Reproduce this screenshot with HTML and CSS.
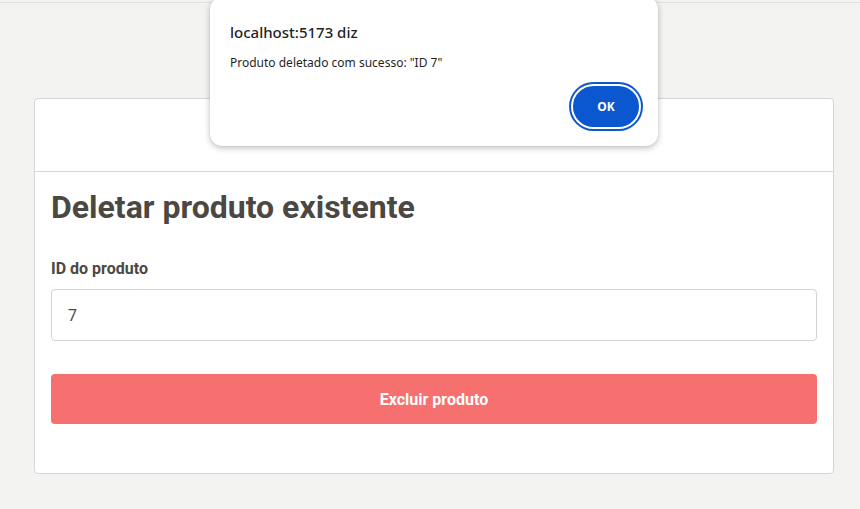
FILE: index.html
```html
<!DOCTYPE html>
<html lang="pt">
<head>
<meta charset="utf-8">
<title>Deletar produto</title>
<link rel="stylesheet" href="styles.css">
</head>
<body>
<div class="topline"></div>
<main class="card">
  <div class="card-header"></div>
  <div class="card-body">
    <h1 class="title">Deletar produto existente</h1>
    <label class="label" for="pid">ID do produto</label>
    <input class="input" id="pid" type="text" value="7">
    <button class="btn-danger" type="button">Excluir produto</button>
  </div>
</main>
<div class="dialog" role="alertdialog">
  <div class="dialog-title">localhost:5173 diz</div>
  <div class="dialog-msg">Produto deletado com sucesso: "ID 7"</div>
  <div class="dialog-actions">
    <button class="dialog-ok" type="button">OK</button>
  </div>
</div>
</body>
</html>
```
FILE: styles.css
```css
* { box-sizing: border-box; }
html, body { margin: 0; padding: 0; }
body {
  background: #f3f3f1;
  font-family: Roboto, "Liberation Sans", sans-serif;
  width: 860px;
  height: 509px;
  overflow: hidden;
  position: relative;
}
.topline {
  height: 1px;
  margin-top: 2px;
  background: #e2e2e0;
}
.card {
  margin: 95px 26px 0 34px;
  background: #fff;
  border: 1px solid #d6d6d4;
  border-radius: 4px;
  height: 376px;
}
.card-header {
  height: 73px;
  border-bottom: 1px solid #d6d6d4;
}
.card-body {
  padding: 16px 16px 0 16px;
  display: flex;
  flex-direction: column;
}
.title {
  margin: 0;
  font-size: 32px;
  font-weight: 700;
  line-height: 38px;
  color: #4b4843;
}
.label {
  margin-top: 33px;
  font-size: 16px;
  font-weight: 700;
  color: #4b4843;
  line-height: 19px;
}
.input {
  margin-top: 11px;
  height: 52px;
  border: 1px solid #d3d3d3;
  border-radius: 4px;
  padding: 0 16px;
  font-family: Roboto, "Liberation Sans", sans-serif;
  font-size: 16px;
  color: #4b4843;
  outline: none;
}
.btn-danger {
  margin-top: 33px;
  height: 50px;
  border: none;
  border-radius: 4px;
  background: #f77070;
  color: #fff;
  font-family: Roboto, "Liberation Sans", sans-serif;
  font-size: 16px;
  font-weight: 700;
}
.dialog {
  position: absolute;
  left: 210px;
  top: -3px;
  width: 448px;
  height: 149px;
  background: #fff;
  border-radius: 12px;
  box-shadow: 0 2px 6px rgba(0,0,0,0.25), 0 0 1px rgba(0,0,0,0.2);
  padding: 25px 20px 0 20px;
  font-family: "Noto Sans", "Open Sans", sans-serif;
  color: #1f1f1f;
}
.dialog-title {
  font-size: 15px;
  font-weight: 500;
  line-height: 20px;
}
.dialog-msg {
  margin-top: 13px;
  font-size: 12px;
  line-height: 16px;
}
.dialog-actions {
  display: flex;
  justify-content: flex-end;
  margin-top: 13px;
}
.dialog-ok {
  width: 70px;
  height: 45px;
  margin-right: -3px;
  border-radius: 23px;
  border: 2px solid #fff;
  background: #0b57d0;
  box-shadow: 0 0 0 2px #0b57d0;
  color: #fff;
  font-family: "Noto Sans", "Open Sans", sans-serif;
  font-size: 12px;
  font-weight: 700;
}
```
